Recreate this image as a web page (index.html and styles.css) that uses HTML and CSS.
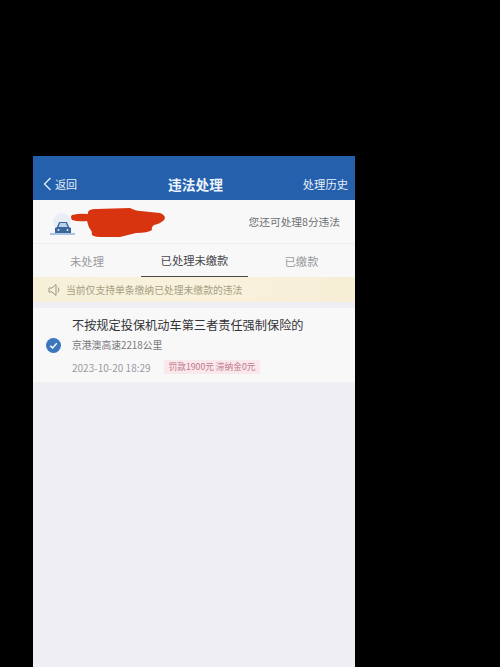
FILE: index.html
```html
<!DOCTYPE html>
<html lang="zh">
<head>
<meta charset="utf-8">
<title>违法处理</title>
<link rel="stylesheet" href="styles.css">
</head>
<body>
<main class="screen">
  <header class="nav">
    <div class="back">
      <svg class="chev" viewBox="0 0 9 14" width="9" height="14"><path d="M7.500 1 1.500 7l6 6" fill="none" stroke="#e6eefa" stroke-width="1.300"/></svg>
      <span>返回</span>
    </div>
    <h1 class="title">违法处理</h1>
    <div class="history">处理历史</div>
  </header>
  <section class="info">
    <div class="who">
      <svg class="car" viewBox="0 0 28 24" width="28" height="24">
        <circle cx="13" cy="9" r="9" fill="#e9eef6"/>
        <path d="M1 21h25" stroke="#8fb2dc" stroke-width="1.500"/>
        <path d="M6 20v-5l2-1 2-5h8l2 5 2 1v5z" fill="#3a6699"/>
        <path d="M11 10h6l1.500 4h-9z" fill="#b9d0ea"/>
        <circle cx="9.500" cy="17" r="1" fill="#dce8f5"/>
        <circle cx="18.500" cy="17" r="1" fill="#dce8f5"/>
      </svg>
      <svg class="scribble" viewBox="0 0 96 30" width="96" height="30">
        <path d="M2 7Q10 5 18 6 17 1 26 1L60 0Q66 3 70 3L90 5Q97 8 94 12 90 16 84 17 81 19 82 22 78 25 66 25L50 29H30Q20 29 22 24 18 19 17 13 8 14 2 12 0 9 2 7z" fill="#d8340f"/>
      </svg>
    </div>
    <div class="points">您还可处理8分违法</div>
  </section>
  <nav class="tabs">
    <div class="tab">未处理</div>
    <div class="tab active">已处理未缴款</div>
    <div class="tab">已缴款</div>
  </nav>
  <div class="notice">
    <svg viewBox="0 0 14 14" width="14" height="14"><path d="M1 5h3l4-3.500v11L4 9H1zM10 4.500q2 2.500 0 5" fill="none" stroke="#9a9484" stroke-width="1"/></svg>
    <span>当前仅支持单条缴纳已处理未缴款的违法</span>
  </div>
  <article class="card">
    <svg class="check" viewBox="0 0 16 16" width="15" height="15"><circle cx="8" cy="8" r="8" fill="#3c76bd"/><path d="M4.500 8.200 7 10.700l4.500-5" fill="none" stroke="#fff" stroke-width="1.500"/></svg>
    <div class="body">
      <div class="law">不按规定投保机动车第三者责任强制保险的</div>
      <div class="place">京港澳高速2218公里</div>
      <div class="meta">
        <span class="time">2023-10-20 18:29</span>
        <span class="fine">罚款1900元 滞纳金0元</span>
      </div>
    </div>
  </article>
</main>
</body>
</html>
```
FILE: styles.css
```css
* { box-sizing: border-box; }
html, body { margin: 0; height: 100%; background: #000; overflow: hidden; }
body {
  padding: 156px 145px 0 33px;
  font-family: "Noto Sans CJK SC", "Liberation Sans", sans-serif;
}
.screen { height: 511px; background: #efeff3; display: flex; flex-direction: column; }
.nav {
  height: 44px; flex: none; background: #2560ad; color: #e8eff9;
  display: grid; grid-template-columns: 1fr auto 1fr; align-items: center;
  padding: 12px 7px 0 10px;
}
.back { display: flex; align-items: center; gap: 3px; font-size: 11px; }
.title { margin: 0; font-size: 13.700px; font-weight: 700; color: #eef4fc; }
.history { text-align: right; font-size: 11.300px; }
.info {
  height: 43px; flex: none; background: #f8f8f9; padding: 0 15px 0 16px;
  display: flex; align-items: center; justify-content: space-between;
}
.who { display: flex; align-items: center; }
.car { flex: none; margin-top: 6px; }
.scribble { margin-left: -7px; margin-top: 3px; }
.points { font-size: 10.700px; color: #6f6f72; }
.tabs {
  height: 34px; flex: none; background: #f8f8f9;
  display: grid; grid-template-columns: 108px 107px 107px;
  border-top: 1px solid #eeeeef;
}
.tab { display: flex; align-items: center; justify-content: center; font-size: 11.300px; color: #9b9b9e; }
.tab.active { color: #47474a; border-bottom: 1px solid #4a4a4d; }
.notice {
  height: 25px; flex: none; background: linear-gradient(90deg, #f7f0d9, #f9f1dc 60%, #f7eed6); color: #a69f82;
  display: flex; align-items: center; gap: 4px; padding: 0 0 0 15px; font-size: 9.800px;
}
.card {
  margin-top: 6px; height: 74px; flex: none; background: #f8f8f9;
  display: flex; align-items: center; padding: 0 0 0 13px; gap: 11px;
}
.check { flex: none; margin-top: 1px; }
.body { display: flex; flex-direction: column; }
.law { font-size: 12.200px; line-height: 18px; color: #333336; }
.place { font-size: 9.800px; line-height: 14px; color: #77777b; margin-top: 4px; }
.meta { display: flex; align-items: center; gap: 13px; margin-top: 8px; }
.time { font-size: 10px; color: #9a9a9e; }
.fine { font-size: 8.700px; line-height: 14px; color: #c0788a; background: #f9e8ec; padding: 0 5px; }
```
